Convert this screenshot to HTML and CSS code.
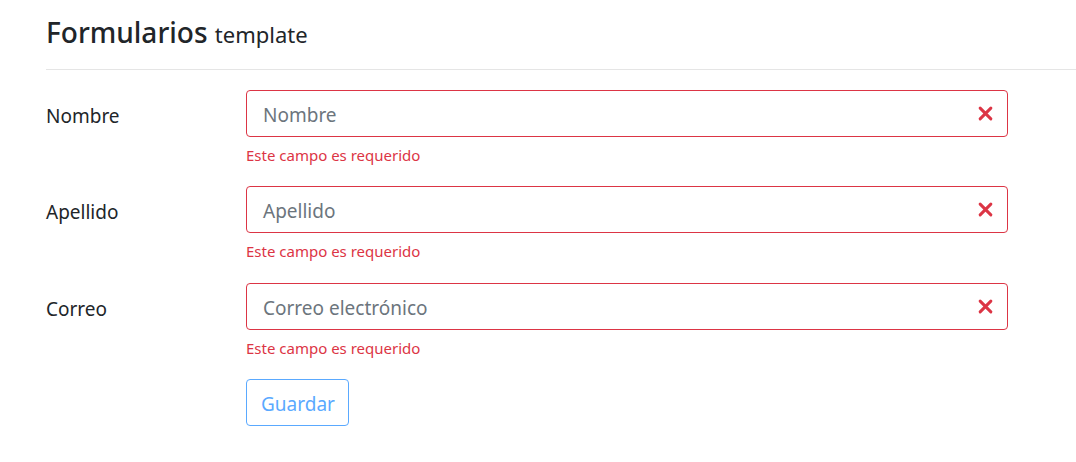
FILE: index.html
```html
<!DOCTYPE html>
<html lang="es">
<head>
<meta charset="utf-8">
<title>Formularios</title>
<link rel="stylesheet" href="styles.css">
</head>
<body>
<main class="page">
  <h3 class="title">Formularios <small class="sub">template</small></h3>
  <hr class="divider">
  <form class="form">
    <div class="row">
      <label class="label" for="nombre">Nombre</label>
      <div class="field">
        <div class="input invalid"><span class="ph">Nombre</span><svg class="xicon" viewBox="0 0 14 14"><path d="M2 2L12 12M12 2L2 12" stroke="#dc3545" stroke-width="2.8" stroke-linecap="round"/></svg></div>
        <div class="feedback">Este campo es requerido</div>
      </div>
    </div>
    <div class="row">
      <label class="label" for="apellido">Apellido</label>
      <div class="field">
        <div class="input invalid"><span class="ph">Apellido</span><svg class="xicon" viewBox="0 0 14 14"><path d="M2 2L12 12M12 2L2 12" stroke="#dc3545" stroke-width="2.8" stroke-linecap="round"/></svg></div>
        <div class="feedback">Este campo es requerido</div>
      </div>
    </div>
    <div class="row">
      <label class="label" for="correo">Correo</label>
      <div class="field">
        <div class="input invalid"><span class="ph">Correo electrónico</span><svg class="xicon" viewBox="0 0 14 14"><path d="M2 2L12 12M12 2L2 12" stroke="#dc3545" stroke-width="2.8" stroke-linecap="round"/></svg></div>
        <div class="feedback">Este campo es requerido</div>
      </div>
    </div>
    <div class="row">
      <div class="label"></div>
      <div class="field">
        <button type="button" class="btn">Guardar</button>
      </div>
    </div>
  </form>
</main>
</body>
</html>
```
FILE: styles.css
```css
* { box-sizing: border-box; }
html, body { margin: 0; padding: 0; background: #fff; }
body {
  font-family: "Noto Sans", "Open Sans", sans-serif;
  color: #212529;
  font-size: 16px;
  line-height: 1.5;
}
.page { padding: 16px 0 0 46px; }
.title {
  margin: 0;
  font-size: 28px;
  font-weight: 500;
  line-height: 1.2;
  height: 38px;
}
.sub { font-size: 22px; font-weight: 400; }
.divider {
  margin: 15px 0 20px 0;
  border: 0;
  border-top: 1px solid rgba(0,0,0,.1);
}
.form { display: flex; flex-direction: column; }
.row { display: flex; margin-bottom: 20.4px; }
.label {
  width: 200px;
  flex: none;
  font-size: 19px;
  line-height: 48px;
  padding-top: 2px;
}
.field { width: 762px; }
.input {
  height: 47px;
  border: 1px solid #dc3545;
  border-radius: 4px;
  display: flex;
  align-items: center;
  justify-content: space-between;
  padding: 3px 14px 0 16px;
  font-size: 19px;
}
.ph { color: #6c757d; }
.xicon { width: 15px; height: 15px; margin-top: -3px; }
.feedback {
  color: #dc3545;
  font-size: 15px;
  margin-top: 7px;
  line-height: 22px;
}
.btn {
  font-family: inherit;
  font-size: 19px;
  color: #5aa9ff;
  background: #fff;
  border: 1px solid #5aa9ff;
  border-radius: 4px;
  height: 47px;
  padding: 2px 13px 0 14px;
  margin: 0;
}
```
